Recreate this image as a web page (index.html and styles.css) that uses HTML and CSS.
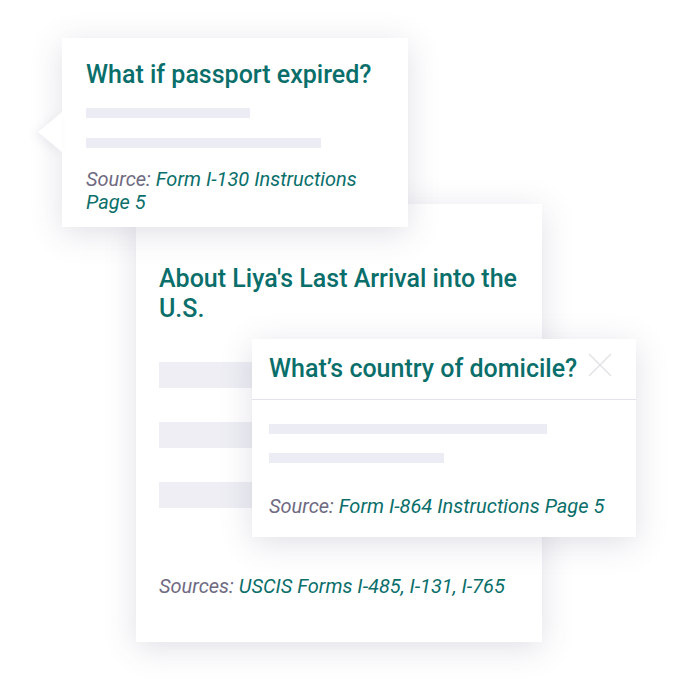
FILE: index.html
```html
<!DOCTYPE html>
<html lang="en">
<head>
  <meta charset="UTF-8" />
  <meta name="viewport" content="width=device-width, initial-scale=1" />
  <title>Form help</title>
  <link rel="stylesheet" href="styles.css">
</head>
<body>

<div class="stage">

  <section class="card card-main">
    <h2>About Liya's Last Arrival into the U.S.</h2>
    <div class="rows">
      <div class="row"></div>
      <div class="row"></div>
      <div class="row"></div>
    </div>
    <p class="source"><span>Sources:</span> USCIS Forms I-485, I-131, I-765</p>
  </section>

  <section class="card card-tip">
    <h3>What if passport expired?</h3>
    <div class="line line-short"></div>
    <div class="line line-long"></div>
    <p class="source"><span>Source:</span> Form I-130 Instructions</p>
    <p class="source">Page 5</p>
  </section>

  <section class="card card-help">
    <div class="help-head">
      <h3>What’s country of domicile?</h3>
      <svg class="close" width="24" height="24" viewBox="0 0 24 24">
        <path d="M1 1 L23 23 M23 1 L1 23" stroke="#e2e2e8" stroke-width="1.5" fill="none" />
      </svg>
    </div>
    <div class="help-body">
      <div class="line line-wide"></div>
      <div class="line line-half"></div>
      <p class="source"><span>Source:</span> Form I-864 Instructions Page 5</p>
    </div>
  </section>

</div>

</body>
</html>
```

FILE: styles.css
```css
html, body {
  margin: 0;
  background: #fff;
  font-family: Roboto, 'Noto Sans', sans-serif;
  color: #0a6f6b;
}
.stage {
  position: relative;
  width: 678px;
  height: 685px;
  overflow: hidden;
}
.card {
  position: absolute;
  background: #fff;
  box-shadow: 0 6px 30px rgba(70, 70, 110, 0.17);
  box-sizing: border-box;
}
.card h2, .card h3 {
  margin: 0;
  font-size: 25px;
  line-height: 30px;
  font-weight: 500;
  color: #0a6f6b;
}
.source {
  margin: 0;
  font-style: italic;
  font-size: 20px;
  line-height: 23px;
  color: #0a6f6b;
}
.source span { color: #6f6a82; }

/* big form card */
.card-main {
  left: 136px;
  top: 204px;
  width: 406px;
  height: 438px;
  padding: 60px 8px 0 23px;
}
.rows {
  display: flex;
  flex-direction: column;
  gap: 34px;
  margin-top: 38px;
}
.row {
  height: 26px;
  width: 200px;
  background: #eeeef4;
}
.card-main .source { margin-top: 67px; }

/* tooltip card */
.card-tip {
  left: 62px;
  top: 38px;
  width: 346px;
  height: 189px;
  padding: 22px 24px 0;
}
.card-tip::before {
  content: '';
  position: absolute;
  left: -24px;
  top: 74px;
  border: 20px solid transparent;
  border-right: 24px solid #fff;
  border-left: 0;
  filter: drop-shadow(-4px 2px 4px rgba(70, 70, 110, 0.08));
}
.line {
  height: 10px;
  background: #ececf4;
}
.line-short { width: 164px; margin-top: 18px; }
.line-long { width: 235px; margin-top: 20px; }
.line-long + .source { margin-top: 20px; }

/* help popup */
.card-help {
  left: 252px;
  top: 339px;
  width: 384px;
  height: 198px;
}
.help-head {
  display: flex;
  align-items: center;
  justify-content: space-between;
  height: 60px;
  padding: 0 24px 0 17px;
  border-bottom: 1px solid #e3e3ee;
}
.close { margin-bottom: 8px; }
.help-body { padding: 24px 17px 0; }
.line-wide { width: 278px; }
.line-half { width: 175px; margin-top: 19px; }
.card-help .source { margin-top: 32px; }
```
